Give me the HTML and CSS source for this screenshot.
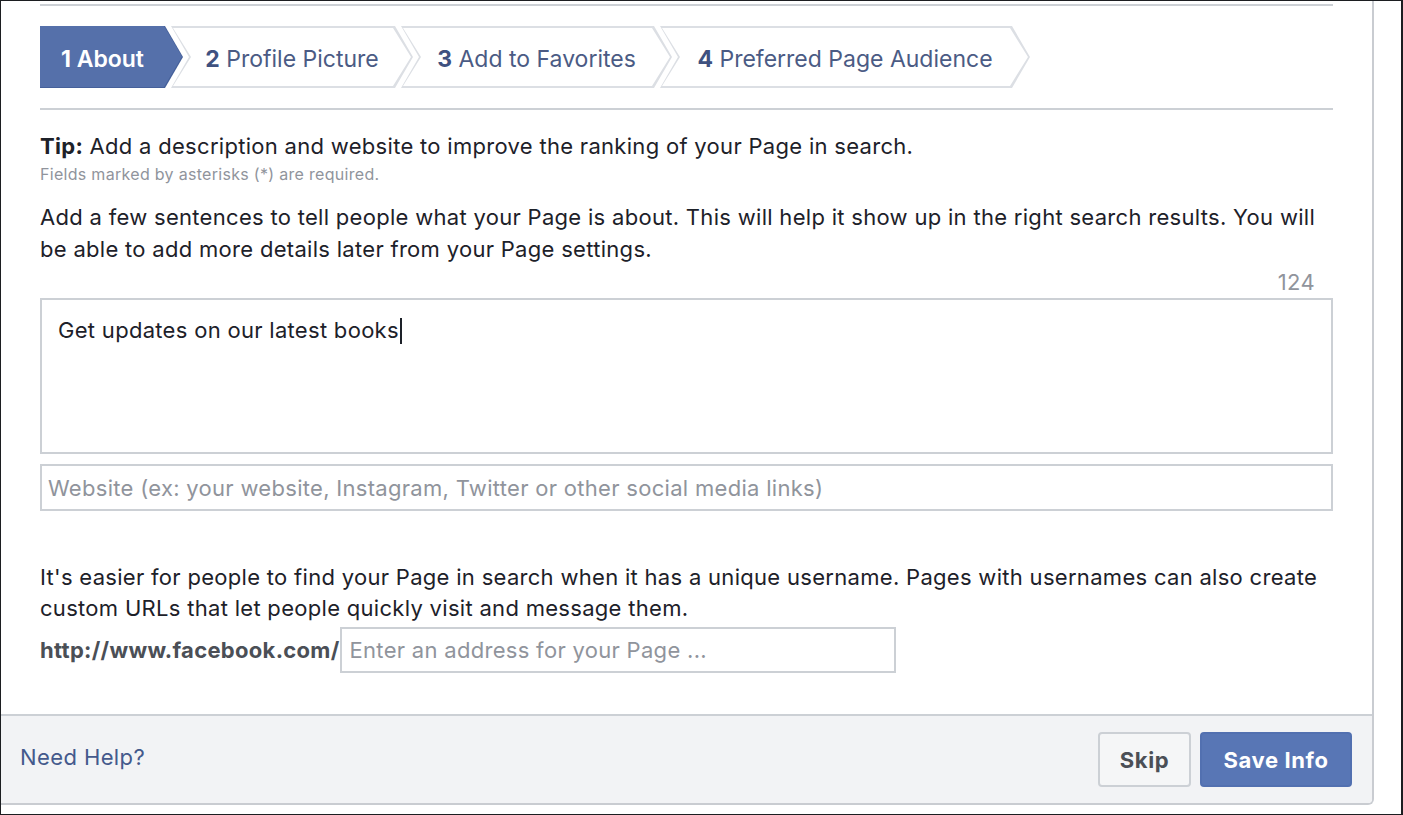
FILE: index.html
```html
<!DOCTYPE html>
<html lang="en">
<head>
<meta charset="utf-8">
<title>Create Page - About</title>
<link rel="stylesheet" href="styles.css">
</head>
<body>
<div class="frame">
  <div class="dialog">
    <div class="content">
      <div class="rule rule-top"></div>
      <div class="steps">
        <div class="step step-1 active"><span class="step-label"><b>1</b> About</span></div>
        <div class="step step-2"><span class="step-label"><b>2</b> Profile Picture</span></div>
        <div class="step step-3"><span class="step-label"><b>3</b> Add to Favorites</span></div>
        <div class="step step-4"><span class="step-label"><b>4</b> Preferred Page Audience</span></div>
      </div>
      <div class="rule rule-bottom"></div>

      <p class="tip"><b>Tip:</b> Add a description and website to improve the ranking of your Page in search.</p>
      <p class="required">Fields marked by asterisks (*) are required.</p>
      <p class="para">Add a few sentences to tell people what your Page is about. This will help it show up in the right search results. You will be able to add more details later from your Page settings.</p>
      <div class="counter">124</div>
      <div class="textarea">Get updates on our latest books<span class="caret"></span></div>
      <input class="field website" type="text" placeholder="Website (ex: your website, Instagram, Twitter or other social media links)">

      <p class="para para-user">It's easier for people to find your Page in search when it has a unique username. Pages with usernames can also create custom URLs that let people quickly visit and message them.</p>
      <div class="url-row">
        <span class="url-prefix">http://www.facebook.com/</span>
        <input class="field username" type="text" placeholder="Enter an address for your Page ...">
      </div>
    </div>
    <div class="footer">
      <a class="help" href="#">Need Help?</a>
      <div class="actions">
        <button class="btn btn-skip" type="button">Skip</button>
        <button class="btn btn-save" type="button">Save Info</button>
      </div>
    </div>
  </div>
</div>
</body>
</html>
```
FILE: styles.css
```css
* { box-sizing: border-box; }

html, body {
  margin: 0;
  padding: 0;
  background: #ffffff;
}

body {
  font-family: Inter, "Noto Sans", "Liberation Sans", sans-serif;
  color: #1d2129;
  letter-spacing: 0.3px;
}

.frame {
  width: 1403px;
  height: 815px;
  border-top: 1px solid #1c1e21;
  border-left: 1px solid #1c1e21;
  border-right: 2px solid #1c1e21;
  border-bottom: 1px solid #1c1e21;
  overflow: hidden;
}

.dialog {
  width: 1373px;
  height: 804px;
  display: flex;
  flex-direction: column;
  border-right: 2px solid #c9ccd1;
  border-bottom: 2px solid #c9ccd1;
  border-bottom-right-radius: 6px;
  overflow: hidden;
  background: #ffffff;
}

.content {
  flex: 1;
  padding: 0 39px 0 39px;
}

.rule {
  height: 2px;
  background: #ccd0d5;
}
.rule-top { margin-top: 3px; }
.rule-bottom { margin-top: 20px; }

/* Steps */
.steps {
  display: flex;
  margin-top: 20px;
  height: 62px;
}

.step {
  position: relative;
  height: 62px;
  display: flex;
  align-items: center;
  justify-content: center;
  padding: 3px 18px 0 18px;
  margin-left: -12px;
  font-size: 23px;
  letter-spacing: 0;
  color: #4b5b84;
}
.step::before,
.step::after {
  content: "";
  position: absolute;
  clip-path: polygon(0 0, calc(100% - 18px) 0, 100% 50%, calc(100% - 18px) 100%, 0 100%, 18px 50%);
}
.step::before {
  inset: 0;
  background: #dcdfe4;
}
.step::after {
  inset: 2px 2px 2px 2px;
  background: #ffffff;
}
.step-label {
  position: relative;
  z-index: 1;
  white-space: nowrap;
}
.step-label b { color: #3f5180; font-weight: 700; }

.step-1 { width: 143px; margin-left: 0; padding-left: 0; }
.step-2 { width: 242px; }
.step-3 { width: 271px; }
.step-4 { width: 370px; }

.step.active { color: #ffffff; font-weight: 600; }
.step.active .step-label b { color: #ffffff; }
.step.active::before {
  background: #45609a;
  clip-path: polygon(0 0, calc(100% - 18px) 0, 100% 50%, calc(100% - 18px) 100%, 0 100%);
}
.step.active::after {
  inset: 0 1px 1px 0;
  background: #5570aa;
  clip-path: polygon(0 0, calc(100% - 18px) 0, 100% 50%, calc(100% - 18px) 100%, 0 100%);
}

/* Text */
p { margin: 0; }

.tip {
  margin-top: 22px;
  font-size: 22px;
  line-height: 28px;
}
.tip b { font-weight: 700; }

.required {
  margin-top: 4px;
  font-size: 16px;
  letter-spacing: 0.3px;
  line-height: 20px;
  color: #90949c;
}

.para {
  margin-top: 17px;
  font-size: 22px;
  line-height: 32px;
}

.counter {
  margin-top: 3px;
  height: 28px;
  line-height: 28px;
  font-size: 22px;
  color: #90949c;
  text-align: right;
  padding-right: 18px;
}

.textarea {
  margin-top: 2px;
  height: 156px;
  border: 2px solid #ccd0d5;
  padding: 16px 16px;
  font-size: 22px;
  line-height: 28px;
}
.caret {
  display: inline-block;
  width: 2px;
  height: 26px;
  background: #1d2129;
  vertical-align: -6px;
  margin-left: 1px;
}

.field {
  display: block;
  border: 2px solid #ccd0d5;
  border-radius: 0;
  outline: none;
  background: #ffffff;
  font-family: inherit;
  font-size: 22px;
  letter-spacing: 0.3px;
  color: #1d2129;
  padding: 0 6px;
  margin: 0;
}
.field::placeholder { color: #90949c; opacity: 1; }

.website {
  margin-top: 10px;
  width: 100%;
  height: 47px;
}

.para-user {
  margin-top: 51px;
  line-height: 31px;
}

.url-row {
  margin-top: 3px;
  display: flex;
  align-items: center;
  height: 46px;
}
.url-prefix {
  font-size: 22px;
  font-weight: 700;
  color: #4b4f56;
}
.username {
  width: 556px;
  height: 46px;
  padding: 0 8px;
}

/* Footer */
.footer {
  height: 89px;
  border-top: 2px solid #ccd0d5;
  background: #f2f3f5;
  display: flex;
  align-items: center;
  justify-content: space-between;
  padding: 0 20px 0 19px;
}

.help {
  font-size: 22px;
  letter-spacing: 0.4px;
  color: #44598c;
  text-decoration: none;
  margin-bottom: 6px;
}

.actions {
  display: flex;
  gap: 9px;
}

.btn {
  height: 55px;
  border-radius: 4px;
  font-family: inherit;
  font-size: 22px;
  font-weight: 700;
  letter-spacing: 0.6px;
  padding: 0;
  cursor: pointer;
}
.btn-skip {
  width: 93px;
  background: #f5f6f7;
  border: 2px solid #ccd0d5;
  color: #4b4f56;
}
.btn-save {
  width: 152px;
  background: #5876b5;
  border: 2px solid #5270b0;
  color: #ffffff;
}
```
